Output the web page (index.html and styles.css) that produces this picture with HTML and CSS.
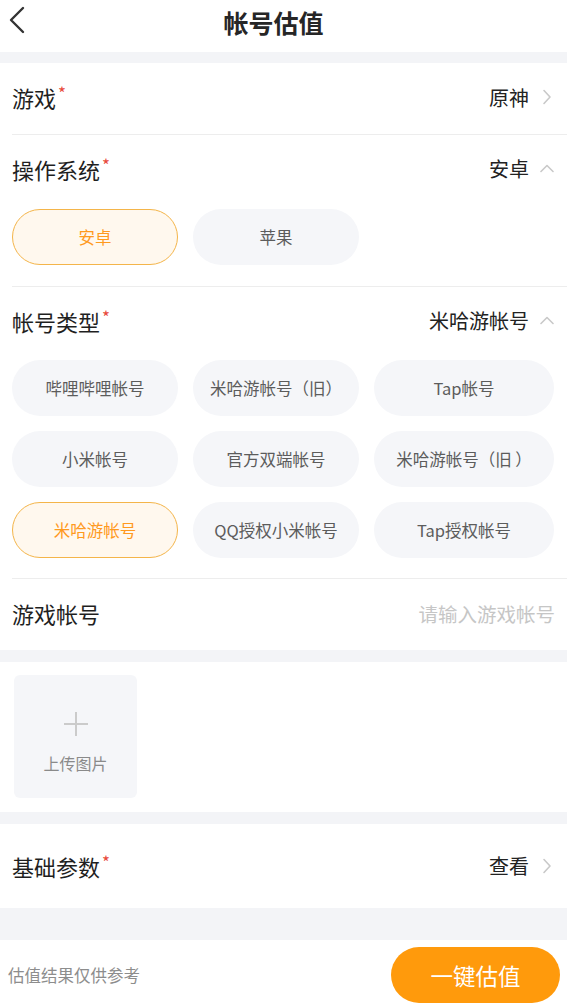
FILE: index.html
```html
<!DOCTYPE html>
<html lang="zh">
<head>
<meta charset="utf-8">
<title>帐号估值</title>
<link rel="stylesheet" href="styles.css">
</head>
<body>
<div class="page">
  <header class="topbar">
    <svg class="back" width="30" height="40" viewBox="0 0 30 40"><polyline points="23,8 11,20 23,32" fill="none" stroke="#333" stroke-width="2.4" stroke-linecap="round" stroke-linejoin="round"/></svg>
    <h1 class="title">帐号估值</h1>
  </header>
  <div class="band band-top"></div>

  <section class="card">
    <div class="row">
      <span class="label">游戏<i class="req">*</i></span>
      <span class="value">原神</span>
      <svg class="chev" width="14" height="16" viewBox="0 0 14 16"><polyline points="4,1.5 10,8 4,14.5" fill="none" stroke="#c9c9c9" stroke-width="1.6" stroke-linecap="round" stroke-linejoin="round"/></svg>
    </div>
    <div class="divider"></div>

    <div class="row row-head">
      <span class="label">操作系统<i class="req">*</i></span>
      <span class="value">安卓</span>
      <svg class="chev" width="14" height="16" viewBox="0 0 14 16"><polyline points="1,10.5 7,4.5 13,10.5" fill="none" stroke="#c9c9c9" stroke-width="1.6" stroke-linecap="round" stroke-linejoin="round"/></svg>
    </div>
    <div class="chips chips-os">
      <span class="chip on">安卓</span>
      <span class="chip">苹果</span>
    </div>
    <div class="divider"></div>

    <div class="row row-head">
      <span class="label">帐号类型<i class="req">*</i></span>
      <span class="value">米哈游帐号</span>
      <svg class="chev" width="14" height="16" viewBox="0 0 14 16"><polyline points="1,10.5 7,4.5 13,10.5" fill="none" stroke="#c9c9c9" stroke-width="1.6" stroke-linecap="round" stroke-linejoin="round"/></svg>
    </div>
    <div class="chips chips-type">
      <span class="chip">哔哩哔哩帐号</span>
      <span class="chip">米哈游帐号（旧）</span>
      <span class="chip">Tap帐号</span>
      <span class="chip">小米帐号</span>
      <span class="chip">官方双端帐号</span>
      <span class="chip">米哈游帐号（旧 ）</span>
      <span class="chip on">米哈游帐号</span>
      <span class="chip">QQ授权小米帐号</span>
      <span class="chip">Tap授权帐号</span>
    </div>
    <div class="divider"></div>

    <div class="row">
      <span class="label">游戏帐号</span>
      <span class="placeholder">请输入游戏帐号</span>
    </div>
  </section>

  <div class="band"></div>

  <section class="upload-area">
    <div class="upload">
      <svg width="26" height="26" viewBox="0 0 26 26"><path d="M13 1v24M1 13h24" stroke="#cbcbcb" stroke-width="2" fill="none"/></svg>
      <span class="upload-text">上传图片</span>
    </div>
  </section>

  <div class="band"></div>

  <section class="card">
    <div class="row row-tall">
      <span class="label">基础参数<i class="req">*</i></span>
      <span class="value">查看</span>
      <svg class="chev" width="14" height="16" viewBox="0 0 14 16"><polyline points="4,1.5 10,8 4,14.5" fill="none" stroke="#c9c9c9" stroke-width="1.6" stroke-linecap="round" stroke-linejoin="round"/></svg>
    </div>
  </section>

  <div class="band band-bottom"></div>

  <footer class="bottombar">
    <span class="note">估值结果仅供参考</span>
    <span class="btn">一键估值</span>
  </footer>
</div>
</body>
</html>
```

FILE: styles.css
```css
* { box-sizing: border-box; }
html, body { margin: 0; padding: 0; background: #fff; }
body {
  font-family: "Noto Sans CJK SC", "Noto Sans", sans-serif;
  color: #222;
}
.page { width: 567px; height: 1004px; overflow: hidden; display: flex; flex-direction: column; }

.topbar {
  height: 52px;
  position: relative;
  display: flex;
  justify-content: center;
}
.back { position: absolute; left: 0; top: 0; }
.title {
  margin: 0 20px 0 0;
  font-size: 25px;
  font-weight: 700;
  line-height: 44px;
  color: #262626;
}

.band { height: 12px; background: #f3f4f7; flex: none; }
.band-top { height: 11px; }
.band-bottom { height: 32px; }

.card { background: #fff; }
.row {
  height: 71px;
  display: flex;
  align-items: center;
  padding: 0 13px 3px 12px;
}
.row-head { height: 70px; }
.row-tall { height: 84px; padding-bottom: 1px; }
.label {
  font-size: 22px;
  color: #1f1f1f;
  flex: 1;
  line-height: 1;
}
.req {
  font-style: normal;
  color: #e8493b;
  font-size: 17px;
  position: relative;
  top: -7px;
  margin-left: 2px;
}
.value {
  font-size: 20px;
  color: #222;
  margin-right: 11px;
}
.chev { flex: none; }
.placeholder {
  font-size: 19.5px;
  color: #c6c6c6;
  margin-right: -1px;
}

.divider { height: 1px; background: #ededed; margin-left: 12px; }

.chips {
  display: grid;
  grid-template-columns: 166px 166px 180px;
  column-gap: 15px;
  row-gap: 15px;
  padding: 3px 0 20px 12px;
}
.chips-os { padding-bottom: 21px; padding-top: 4px; }
.chip {
  height: 56px;
  border-radius: 28px;
  background: #f5f6f9;
  color: #5c5c5c;
  font-size: 16.5px;
  display: flex;
  align-items: center;
  justify-content: center;
  white-space: nowrap;
}
.chip.on {
  background: #fff8ee;
  border: 1px solid #f4b54a;
  color: #ff9a1e;
}

.upload-area { background: #fff; padding: 13px 14px 14px; }
.upload {
  width: 123px;
  height: 123px;
  background: #f5f6f9;
  border-radius: 6px;
  display: flex;
  flex-direction: column;
  align-items: center;
  padding-top: 36px;
}
.upload-text {
  margin-top: 14px;
  font-size: 16px;
  color: #8a8a8a;
}

.bottombar {
  flex: 1;
  display: flex;
  align-items: center;
  justify-content: space-between;
  padding: 0 7px 0 8px;
  background: #fff;
}
.note { font-size: 16.5px; color: #8d8d8d; margin-top: 5px; }
.btn {
  width: 169px;
  height: 56px;
  border-radius: 28px;
  background: #ff9a0c;
  color: #fff;
  font-size: 22.5px;
  display: flex;
  align-items: center;
  justify-content: center;
  margin-top: 6px;
}
```
